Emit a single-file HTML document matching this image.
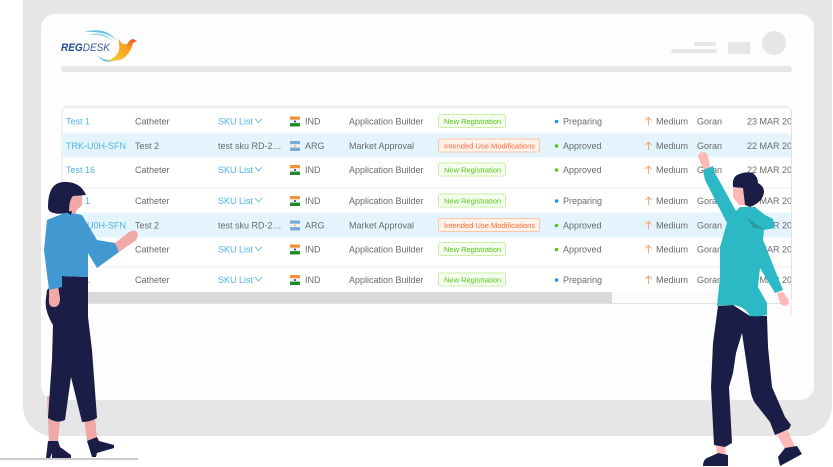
<!DOCTYPE html>
<html><head><meta charset="utf-8">
<style>
html,body{margin:0;padding:0;background:#fff;width:833px;height:467px;overflow:hidden}
svg{display:block;filter:blur(.35px)}
text{font-family:"Liberation Sans",sans-serif;font-size:9px;fill:#6a6a6a}
.l{fill:#4fb3e8}
.g{fill:#52c41a;font-size:7.5px}
.o{fill:#fa6a3c;font-size:7.55px}
.a{fill:none;stroke:#f5a062;stroke-width:.9}
.c{fill:none;stroke:#4fb3e8;stroke-width:.8}
</style></head><body>
<svg width="833" height="467" viewBox="0 0 833 467" xmlns="http://www.w3.org/2000/svg">
<defs>
<linearGradient id="b" x1="0" y1="1" x2="1" y2="0"><stop offset="0" stop-color="#f9d13a"/><stop offset=".6" stop-color="#f7a21b"/><stop offset="1" stop-color="#e8452a"/></linearGradient>
<clipPath id="t"><rect x="62" y="106" width="729" height="198"/></clipPath>
</defs>
<rect x="23" y="-30" width="809" height="466" rx="30" fill="#e6e6e6"/>
<rect x="41" y="14" width="773" height="386" rx="14" fill="#fdfdfd"/>
<rect x="61" y="66" width="731" height="6" rx="3" fill="#e6e6e6"/>
<!-- logo -->
<text x="61" y="51" textLength="49" lengthAdjust="spacingAndGlyphs" style="font-size:10.8px;font-weight:bold;font-style:italic;fill:#1c4a94">REG<tspan style="font-weight:normal;fill:#3a5f9e">DESK</tspan></text>
<path d="M84 32Q106 26 117 41Q108 31 84 32Z" fill="#6fc3e0"/>
<path d="M88 35Q104 30 113 41Q104 34 88 35Z" fill="#a5d9ea"/>
<path d="M97 55Q102 60 110 60L116 59Q110 63 104 61Q100 59 97 55Z" fill="#5fc0dd"/>
<path d="M118 38Q122 46 127 44Q130 39 133 39L137 41L133 43Q131 52 124 58Q117 62 108 60.500Q117 57 119 50Q120 44 118 38Z" fill="url(#b)"/>
<!-- header placeholders -->
<rect x="694" y="42" width="22" height="4" rx="2" fill="#e6e6e6"/>
<rect x="671" y="49" width="46" height="4" rx="2" fill="#e6e6e6"/>
<rect x="728" y="42" width="22" height="12" fill="#e6e6e6"/>
<circle cx="774" cy="43" r="12" fill="#e6e6e6"/>
<!-- table -->
<path d="M612 303H791V316" fill="none" stroke="#e4e4e4" stroke-width="1"/>
<rect x="62" y="106.500" width="729.500" height="197" rx="6" fill="#fff" stroke="#e2e2e2"/>
<rect x="63" y="107" width="728" height="2" fill="#f5f5f5"/>
<g clip-path="url(#t)">
<rect x="62" y="133.500" width="729" height="24" fill="#e3f4fd"/>
<rect x="62" y="212.700" width="729" height="25" fill="#e3f4fd"/>
<rect x="62" y="187" width="729" height="2" fill="#f6f6f6"/>
<rect x="62" y="266" width="729" height="2" fill="#f6f6f6"/>
<rect x="62" y="292" width="729" height="11" fill="#fbfbfb"/>
<rect x="62" y="292" width="550" height="11" fill="#d9d9d9"/>

<g transform="translate(0,124.500)"><text x="66" class="l">Test 1</text><text x="135">Catheter</text><text x="218" class="l">SKU List</text><path class="c" d="M255-6l3.500 4 3.500-4"/><rect x="290" y="-8" width="10" height="3.300" fill="#f4923a"/><rect x="290" y="-4.700" width="10" height="3.300" fill="#f2f2f2"/><rect x="290" y="-1.400" width="10" height="3.400" fill="#1f8a2c"/><circle cx="295" cy="-3" r="1" fill="#2a3a7a"/><text x="305">IND</text><text x="349">Application Builder</text><rect x="438.500" y="-10" width="67" height="13" rx="2" fill="#f6ffed" stroke="#c8efa8"/><text x="444" class="g" y="-.5">New Registration</text><circle cx="556.500" cy="-3" r="1.800" fill="#1890ff"/><text x="563">Preparing</text><path class="a" d="M648.500 1V-7M645.500-4l3-3 3 3"/><text x="656">Medium</text><text x="697">Goran</text><text x="747">23 MAR 2021</text></g>

<g transform="translate(0,149)"><text x="66" class="l">TRK-U0H-SFN</text><text x="135">Test 2</text><text x="218">test sku RD-2…</text><rect x="290" y="-8" width="10" height="3.300" fill="#75aadb"/><rect x="290" y="-4.700" width="10" height="3.300" fill="#f2f2f2"/><rect x="290" y="-1.400" width="10" height="3.400" fill="#75aadb"/><circle cx="295" cy="-3" r="1" fill="#f5b942"/><text x="305">ARG</text><text x="349">Market Approval</text><rect x="438.500" y="-10" width="101" height="13" rx="2" fill="#fff2e8" stroke="#ffc6a8"/><text x="444" class="o" y="-.5">Intended Use Modifications</text><circle cx="556.500" cy="-3" r="1.800" fill="#52c41a"/><text x="563">Approved</text><path class="a" d="M648.500 1V-7M645.500-4l3-3 3 3"/><text x="656">Medium</text><text x="697">Goran</text><text x="747">22 MAR 2021</text></g>

<g transform="translate(0,173)"><text x="66" class="l">Test 16</text><text x="135">Catheter</text><text x="218" class="l">SKU List</text><path class="c" d="M255-6l3.500 4 3.500-4"/><rect x="290" y="-8" width="10" height="3.300" fill="#f4923a"/><rect x="290" y="-4.700" width="10" height="3.300" fill="#f2f2f2"/><rect x="290" y="-1.400" width="10" height="3.400" fill="#1f8a2c"/><circle cx="295" cy="-3" r="1" fill="#2a3a7a"/><text x="305">IND</text><text x="349">Application Builder</text><rect x="438.500" y="-10" width="67" height="13" rx="2" fill="#f6ffed" stroke="#c8efa8"/><text x="444" class="g" y="-.5">New Registration</text><circle cx="556.500" cy="-3" r="1.800" fill="#52c41a"/><text x="563">Approved</text><path class="a" d="M648.500 1V-7M645.500-4l3-3 3 3"/><text x="656">Medium</text><text x="697">Goran</text><text x="747">22 MAR 2021</text></g>

<g transform="translate(0,204)"><text x="66" class="l">Test 1</text><text x="135">Catheter</text><text x="218" class="l">SKU List</text><path class="c" d="M255-6l3.500 4 3.500-4"/><rect x="290" y="-8" width="10" height="3.300" fill="#f4923a"/><rect x="290" y="-4.700" width="10" height="3.300" fill="#f2f2f2"/><rect x="290" y="-1.400" width="10" height="3.400" fill="#1f8a2c"/><circle cx="295" cy="-3" r="1" fill="#2a3a7a"/><text x="305">IND</text><text x="349">Application Builder</text><rect x="438.500" y="-10" width="67" height="13" rx="2" fill="#f6ffed" stroke="#c8efa8"/><text x="444" class="g" y="-.5">New Registration</text><circle cx="556.500" cy="-3" r="1.800" fill="#1890ff"/><text x="563">Preparing</text><path class="a" d="M648.500 1V-7M645.500-4l3-3 3 3"/><text x="656">Medium</text><text x="697">Goran</text><text x="747">23 MAR 2021</text></g>

<g transform="translate(0,228.500)"><text x="66" class="l">TRK-U0H-SFN</text><text x="135">Test 2</text><text x="218">test sku RD-2…</text><rect x="290" y="-8" width="10" height="3.300" fill="#75aadb"/><rect x="290" y="-4.700" width="10" height="3.300" fill="#f2f2f2"/><rect x="290" y="-1.400" width="10" height="3.400" fill="#75aadb"/><circle cx="295" cy="-3" r="1" fill="#f5b942"/><text x="305">ARG</text><text x="349">Market Approval</text><rect x="438.500" y="-10" width="101" height="13" rx="2" fill="#fff2e8" stroke="#ffc6a8"/><text x="444" class="o" y="-.5">Intended Use Modifications</text><circle cx="556.500" cy="-3" r="1.800" fill="#52c41a"/><text x="563">Approved</text><path class="a" d="M648.500 1V-7M645.500-4l3-3 3 3"/><text x="656">Medium</text><text x="697">Goran</text><text x="747">22 MAR 2021</text></g>

<g transform="translate(0,252.500)"><text x="66" class="l">Test 16</text><text x="135">Catheter</text><text x="218" class="l">SKU List</text><path class="c" d="M255-6l3.500 4 3.500-4"/><rect x="290" y="-8" width="10" height="3.300" fill="#f4923a"/><rect x="290" y="-4.700" width="10" height="3.300" fill="#f2f2f2"/><rect x="290" y="-1.400" width="10" height="3.400" fill="#1f8a2c"/><circle cx="295" cy="-3" r="1" fill="#2a3a7a"/><text x="305">IND</text><text x="349">Application Builder</text><rect x="438.500" y="-10" width="67" height="13" rx="2" fill="#f6ffed" stroke="#c8efa8"/><text x="444" class="g" y="-.5">New Registration</text><circle cx="556.500" cy="-3" r="1.800" fill="#52c41a"/><text x="563">Approved</text><path class="a" d="M648.500 1V-7M645.500-4l3-3 3 3"/><text x="656">Medium</text><text x="697">Goran</text><text x="747">22 MAR 2021</text></g>

<g transform="translate(0,283)"><text x="66" class="l">Test 1</text><text x="135">Catheter</text><text x="218" class="l">SKU List</text><path class="c" d="M255-6l3.500 4 3.500-4"/><rect x="290" y="-8" width="10" height="3.300" fill="#f4923a"/><rect x="290" y="-4.700" width="10" height="3.300" fill="#f2f2f2"/><rect x="290" y="-1.400" width="10" height="3.400" fill="#1f8a2c"/><circle cx="295" cy="-3" r="1" fill="#2a3a7a"/><text x="305">IND</text><text x="349">Application Builder</text><rect x="438.500" y="-10" width="67" height="13" rx="2" fill="#f6ffed" stroke="#c8efa8"/><text x="444" class="g" y="-.5">New Registration</text><circle cx="556.500" cy="-3" r="1.800" fill="#1890ff"/><text x="563">Preparing</text><path class="a" d="M648.500 1V-7M645.500-4l3-3 3 3"/><text x="656">Medium</text><text x="697">Goran</text><text x="747">23 MAR 2021</text></g>
</g>

<!-- woman -->
<rect x="0" y="458" width="138" height="2" fill="#ccc"/>
<path d="M47 396L49 396L60 420L58 442L49 442L48 420ZM84 419L95 417L97 439L87 441Z" fill="#f0a9a7"/>
<path d="M48 441H58L60 447L71 455V458H52V453L50 458H46ZM87 441L97 437L99 441L114 445V448L97 453L96 457H92Z" fill="#1a1d45"/>
<path d="M62 276L88 277L88 317L92 350L97 418Q90 422 82 422L71 377L65 420Q57 424 48 418L52 360L53 325Q44 310 46 298L47 290Z" fill="#1a1d45"/>
<path d="M49 288L58 286L60 298Q60 307 54 307Q48 307 49 298Z" fill="#f0a9a7"/>
<path d="M115 243L129 232Q134 229 137 232Q139 237 135 241L119 252Z" fill="#f0a9a7"/>
<path d="M47 220L67 212L82 215L97 240L115 243L119 252L97 268L88 253L88 277L62 276L62 287L49 290L44 250Z" fill="#4299d2"/>
<path d="M69 197L82 194V205L76 211V214L68 213Z" fill="#f0a9a7"/>
<path d="M66 212L72 211L71 215Z" fill="#1a1d45"/>
<path d="M48 207Q48 183 63 182Q80 181 86 195L73 196Q69 200 69 212Q60 215 54 213Q48 212 48 207Z" fill="#1a1d45"/>
<!-- man -->
<path d="M716 444L725 445L726 455L717 454ZM776 433L788 431L795 447L785 449Z" fill="#ffb8b8"/>
<path d="M703 466Q703 460 707 458L716 454L718 453L728 455V466ZM778 457L785 448L797 446L802 454L780 466Z" fill="#1a1d45"/>
<path d="M718 306L733 305L750 316L767 316L768 347L772 387L785 417L791 425L789 429L775 435L770 422L755 403Q751 397 750 387L742 333L736 353L733 373L729 387L732 443L725 447L714 445L711 387L713 343Z" fill="#1a1d45"/>
<path d="M777 293L783 292L789 300Q789 306 785 306Q781 305 780 303Z" fill="#ffb8b8"/>
<path d="M698 157Q699 152 703 152Q707 152 708 156L710 167L704 170Z" fill="#ffb8b8"/>
<path d="M703 170L713 166L715 173L736 211L740 207L755 207L765 215L773 219L775 228L764 230L763 240L783 290L775 293L760 268L758 287L767 303L767 315Q758 317 750 316Q744 306 733 305Q724 305 717 306L720 277L720 247L727 223L705 180Z" fill="#2cb9c5"/>
<path d="M747 217Q755 224 764 229L753 228Z" fill="#279aa4"/>
<path d="M733 187L745 186V205L739 205L733 197Z" fill="#ffb8b8"/>
<path d="M733 187Q732 178 737 175Q745 171 753 173Q758 177 758 183Q764 186 764 192Q763 202 750 207L745 205L743 188Z" fill="#1a1d45"/>
</svg>
</body></html>
